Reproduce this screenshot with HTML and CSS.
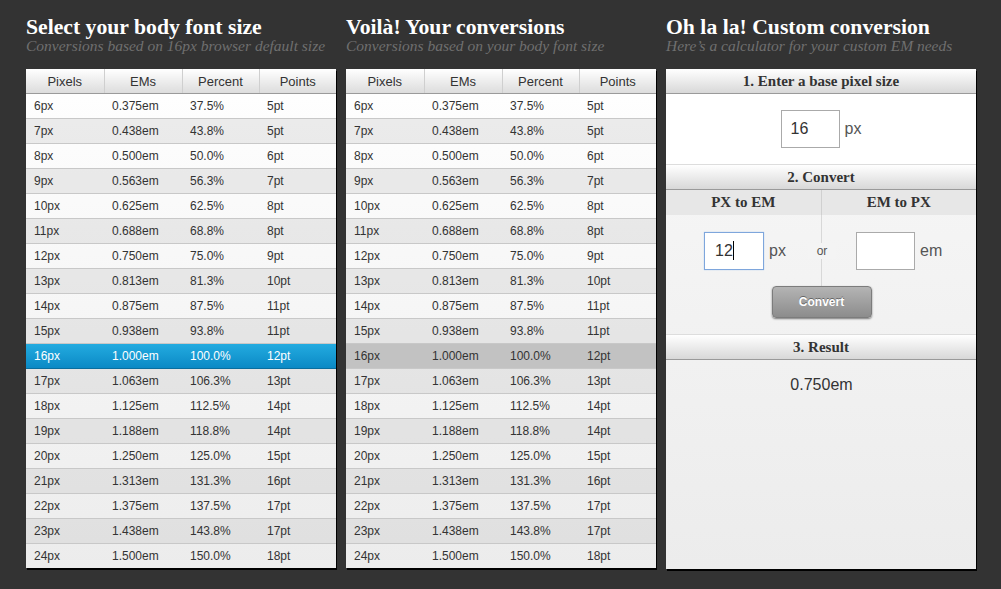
FILE: index.html
```
<!DOCTYPE html>
<html>
<head>
<meta charset="utf-8">
<link rel="stylesheet" href="styles.css">
</head>
<body>
<div class="page">
  <section class="col">
    <h1 class="title">Select your body font size</h1>
    <p class="sub">Conversions based on 16px browser default size</p>
    <table class="conv">
      <colgroup><col class="c1"><col class="c2"><col class="c3"><col class="c4"></colgroup>
      <thead><tr><th>Pixels</th><th>EMs</th><th>Percent</th><th>Points</th></tr></thead>
      <tbody>
        <tr><td>6px</td><td>0.375em</td><td>37.5%</td><td>5pt</td></tr>
        <tr><td>7px</td><td>0.438em</td><td>43.8%</td><td>5pt</td></tr>
        <tr><td>8px</td><td>0.500em</td><td>50.0%</td><td>6pt</td></tr>
        <tr><td>9px</td><td>0.563em</td><td>56.3%</td><td>7pt</td></tr>
        <tr><td>10px</td><td>0.625em</td><td>62.5%</td><td>8pt</td></tr>
        <tr><td>11px</td><td>0.688em</td><td>68.8%</td><td>8pt</td></tr>
        <tr><td>12px</td><td>0.750em</td><td>75.0%</td><td>9pt</td></tr>
        <tr><td>13px</td><td>0.813em</td><td>81.3%</td><td>10pt</td></tr>
        <tr><td>14px</td><td>0.875em</td><td>87.5%</td><td>11pt</td></tr>
        <tr><td>15px</td><td>0.938em</td><td>93.8%</td><td>11pt</td></tr>
        <tr class="sel-blue"><td>16px</td><td>1.000em</td><td>100.0%</td><td>12pt</td></tr>
        <tr><td>17px</td><td>1.063em</td><td>106.3%</td><td>13pt</td></tr>
        <tr><td>18px</td><td>1.125em</td><td>112.5%</td><td>14pt</td></tr>
        <tr><td>19px</td><td>1.188em</td><td>118.8%</td><td>14pt</td></tr>
        <tr><td>20px</td><td>1.250em</td><td>125.0%</td><td>15pt</td></tr>
        <tr><td>21px</td><td>1.313em</td><td>131.3%</td><td>16pt</td></tr>
        <tr><td>22px</td><td>1.375em</td><td>137.5%</td><td>17pt</td></tr>
        <tr><td>23px</td><td>1.438em</td><td>143.8%</td><td>17pt</td></tr>
        <tr><td>24px</td><td>1.500em</td><td>150.0%</td><td>18pt</td></tr>
      </tbody>
    </table>
  </section>

  <section class="col">
    <h1 class="title">Voilà! Your conversions</h1>
    <p class="sub">Conversions based on your body font size</p>
    <table class="conv">
      <colgroup><col class="c1"><col class="c2"><col class="c3"><col class="c4"></colgroup>
      <thead><tr><th>Pixels</th><th>EMs</th><th>Percent</th><th>Points</th></tr></thead>
      <tbody>
        <tr><td>6px</td><td>0.375em</td><td>37.5%</td><td>5pt</td></tr>
        <tr><td>7px</td><td>0.438em</td><td>43.8%</td><td>5pt</td></tr>
        <tr><td>8px</td><td>0.500em</td><td>50.0%</td><td>6pt</td></tr>
        <tr><td>9px</td><td>0.563em</td><td>56.3%</td><td>7pt</td></tr>
        <tr><td>10px</td><td>0.625em</td><td>62.5%</td><td>8pt</td></tr>
        <tr><td>11px</td><td>0.688em</td><td>68.8%</td><td>8pt</td></tr>
        <tr><td>12px</td><td>0.750em</td><td>75.0%</td><td>9pt</td></tr>
        <tr><td>13px</td><td>0.813em</td><td>81.3%</td><td>10pt</td></tr>
        <tr><td>14px</td><td>0.875em</td><td>87.5%</td><td>11pt</td></tr>
        <tr><td>15px</td><td>0.938em</td><td>93.8%</td><td>11pt</td></tr>
        <tr class="sel-gray"><td>16px</td><td>1.000em</td><td>100.0%</td><td>12pt</td></tr>
        <tr><td>17px</td><td>1.063em</td><td>106.3%</td><td>13pt</td></tr>
        <tr><td>18px</td><td>1.125em</td><td>112.5%</td><td>14pt</td></tr>
        <tr><td>19px</td><td>1.188em</td><td>118.8%</td><td>14pt</td></tr>
        <tr><td>20px</td><td>1.250em</td><td>125.0%</td><td>15pt</td></tr>
        <tr><td>21px</td><td>1.313em</td><td>131.3%</td><td>16pt</td></tr>
        <tr><td>22px</td><td>1.375em</td><td>137.5%</td><td>17pt</td></tr>
        <tr><td>23px</td><td>1.438em</td><td>143.8%</td><td>17pt</td></tr>
        <tr><td>24px</td><td>1.500em</td><td>150.0%</td><td>18pt</td></tr>
      </tbody>
    </table>
  </section>

  <section class="col">
    <h1 class="title">Oh la la! Custom conversion</h1>
    <p class="sub">Here’s a calculator for your custom EM needs</p>
    <div class="calc">
      <div class="calc-head">1. Enter a base pixel size</div>
      <div class="calc-base">
        <div class="field">16</div><span class="unit">px</span>
      </div>
      <div class="calc-head">2. Convert</div>
      <div class="calc-sub">
        <div class="sub-cell">PX to EM</div>
        <div class="sub-cell">EM to PX</div>
      </div>
      <div class="calc-convert">
        <div class="conv-half left">
          <div class="field focus">12<span class="caret"></span></div><span class="unit">px</span>
        </div>
        <span class="or">or</span>
        <div class="conv-half right">
          <div class="field"></div><span class="unit">em</span>
        </div>
      </div>
      <div class="calc-btnrow">
        <button class="btn">Convert</button>
      </div>
      <div class="calc-head">3. Result</div>
      <div class="calc-result">0.750em</div>
    </div>
  </section>
</div>
</body>
</html>
```
FILE: styles.css
```
html, body {
  margin: 0;
  padding: 0;
  background: #333333;
  height: 100%;
}
.page {
  display: flex;
  gap: 10px;
  padding: 17px 0 0 26px;
  font-family: "Liberation Sans", Arial, sans-serif;
}
.col {
  width: 310px;
  display: flex;
  flex-direction: column;
}
.title {
  margin: 0;
  font-family: "Liberation Serif", "Times New Roman", serif;
  font-weight: bold;
  font-size: 21.7px;
  line-height: 21px;
  color: #ffffff;
  white-space: nowrap;
}
.sub {
  margin: 0;
  font-family: "Liberation Serif", "Times New Roman", serif;
  font-style: italic;
  font-size: 15.5px;
  line-height: 15px;
  color: #6f6f6f;
  white-space: nowrap;
  height: 15px;
}
.conv {
  margin-top: 16px;
  width: 310px;
  border-collapse: collapse;
  table-layout: fixed;
  background: linear-gradient(#ffffff, #ececec);
  box-shadow: 1px 2px 0 #000;
  font-size: 12px;
  color: #333;
}
.c1, .c2 { width: 78px; }
.c3, .c4 { width: 77px; }
.conv th {
  height: 24px;
  padding: 0;
  font-weight: normal;
  font-size: 13px;
  color: #333;
  text-align: center;
  background: linear-gradient(#ffffff, #dcdcdc);
  border-bottom: 1px solid #9a9a9a;
  border-left: 1px solid #cfcfcf;
}
.conv th:first-child { border-left: none; }
.conv td {
  height: 24px;
  padding: 0 0 0 8px;
  border-bottom: 1px solid #c8c8c8;
  white-space: nowrap;
}
.conv tbody tr:last-child td { border-bottom: none; }
.conv tbody tr:nth-child(even) { background: rgba(200, 200, 200, 0.35); }
.conv tbody tr.sel-blue {
  background: linear-gradient(#23abe0, #0a88c4);
  color: #ffffff;
}
.conv tbody tr.sel-blue td { border-bottom-color: #0a6e9e; }
.conv tbody tr.sel-gray { background: #c2c2c2; }

.calc {
  margin-top: 16px;
  width: 310px;
  height: 500px;
  background: linear-gradient(#f8f8f8, #ececec);
  box-shadow: 1px 2px 0 #000;
  display: flex;
  flex-direction: column;
}
.calc-head {
  height: 24px;
  line-height: 24px;
  text-align: center;
  font-family: "Liberation Serif", "Times New Roman", serif;
  font-weight: bold;
  font-size: 15px;
  color: #333;
  background: linear-gradient(#ffffff, #d8d8d8);
  border-bottom: 1px solid #9a9a9a;
}
.calc-base {
  height: 71px;
  border-bottom: 1px solid #dddddd;
  background: #ffffff;
  display: flex;
  align-items: center;
  justify-content: center;
  box-sizing: border-box;
}
.field {
  width: 59px;
  height: 38px;
  box-sizing: border-box;
  border: 1px solid #aaaaaa;
  background: #fff;
  font-size: 16px;
  color: #333;
  line-height: 36px;
  padding-left: 9px;
  display: flex;
  align-items: center;
}
.field.focus {
  border: 1px solid #7ea6dc;
  box-shadow: 0 0 1px #9fc0ec;
  width: 60px;
  padding-left: 10px;
}
.caret {
  display: inline-block;
  width: 1px;
  height: 19px;
  background: #000;
}
.unit {
  font-size: 16px;
  color: #555;
  margin-left: 5px;
}
.calc-sub {
  display: flex;
  height: 25px;
  background: #e7e7e7;
}
.sub-cell {
  flex: 1;
  text-align: center;
  line-height: 25px;
  font-family: "Liberation Serif", "Times New Roman", serif;
  font-weight: bold;
  font-size: 15px;
  color: #333;
}
.sub-cell:first-child { border-right: 1px solid #d0d0d0; }
.calc-convert {
  display: flex;
  align-items: center;
  height: 71px;
  background: linear-gradient(to right, transparent 155px, #d8d8d8 155px, #d8d8d8 156px, transparent 156px);
}
.conv-half {
  display: flex;
  align-items: center;
}
.conv-half.left { margin-left: 38px; width: 104px; }
.conv-half.right { margin-left: 20px; }
.or {
  font-size: 12px;
  color: #555;
  width: 28px;
  text-align: center;
  background: #f4f4f4;
  line-height: 16px;
}
.calc-btnrow {
  height: 48px;
  display: flex;
  justify-content: center;
  align-items: flex-start;
  border-bottom: 1px solid #dddddd;
  background: linear-gradient(to right, transparent 155px, #d8d8d8 155px, #d8d8d8 156px, transparent 156px) no-repeat 0 0 / 100% 2px;
}
.btn {
  width: 100px;
  height: 32px;
  margin-left: 1px;
  border: 1px solid #7c7c7c;
  border-radius: 4px;
  background: linear-gradient(#b4b4b4, #8c8c8c);
  box-shadow: 0 1px 2px rgba(0,0,0,0.5);
  color: #ffffff;
  font-family: "Liberation Sans", Arial, sans-serif;
  font-weight: bold;
  font-size: 12px;
  text-shadow: 0 -1px 0 #666;
}
.calc-result {
  text-align: center;
  font-size: 16px;
  color: #333;
  padding-top: 16px;
  padding-left: 1px;
}
```
